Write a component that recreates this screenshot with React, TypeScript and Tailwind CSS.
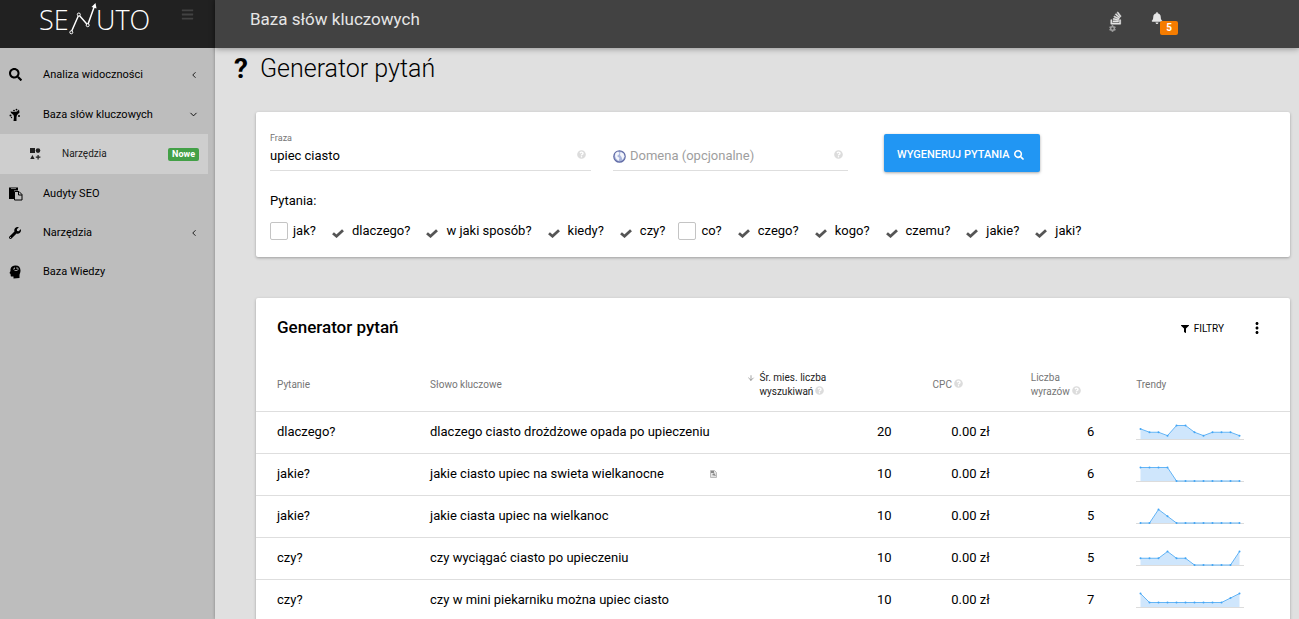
import { FaBars, FaBell, FaCog, FaFilter, FaQuestionCircle, FaSearch, FaStackOverflow, FaWrench } from "react-icons/fa";
import { ArrowDown, ChevronDown, ChevronLeft } from "lucide-react";
import { MdMoreVert } from "react-icons/md";

const questions = [
  { label: "jak?", checked: false },
  { label: "dlaczego?", checked: true },
  { label: "w jaki sposób?", checked: true },
  { label: "kiedy?", checked: true },
  { label: "czy?", checked: true },
  { label: "co?", checked: false },
  { label: "czego?", checked: true },
  { label: "kogo?", checked: true },
  { label: "czemu?", checked: true },
  { label: "jakie?", checked: true },
  { label: "jaki?", checked: true },
];

const rows = [
  { question: "dlaczego?", keyword: "dlaczego ciasto drożdżowe opada po upieczeniu", searches: 20, cpc: "0.00 zł", words: 6, trend: [3, 2, 2, 1, 4, 4, 2, 1, 2, 2, 2, 1] },
  { question: "jakie?", keyword: "jakie ciasto upiec na swieta wielkanocne", searches: 10, cpc: "0.00 zł", words: 6, snippet: true, trend: [1, 1, 1, 1, 0, 0, 0, 0, 0, 0, 0, 0] },
  { question: "jakie?", keyword: "jakie ciasta upiec na wielkanoc", searches: 10, cpc: "0.00 zł", words: 5, trend: [0, 0, 2, 1, 0, 0, 0, 0, 0, 0, 0, 0] },
  { question: "czy?", keyword: "czy wyciągać ciasto po upieczeniu", searches: 10, cpc: "0.00 zł", words: 5, trend: [1, 1, 1, 2, 1, 1, 0, 0, 0, 0, 0, 2] },
  { question: "czy?", keyword: "czy w mini piekarniku można upiec ciasto", searches: 10, cpc: "0.00 zł", words: 7, trend: [3, 1, 1, 1, 1, 1, 1, 1, 1, 1, 2, 3] },
];

const KeywordIcon = () => (
  <svg width="12" height="14" viewBox="0 0 12 14" fill="currentColor">
    <path d="M1.5 3.5 L5 4 L8 3.5 L10 1.5 L10.5 4.5 L8 7 L7.5 9 L7.5 13 L4.5 13 L5 9 L4.5 7 L2 5 Z" />
    <circle cx="1.5" cy="7.5" r="1" />
    <circle cx="5" cy="2.6" r=".9" />
    <circle cx="7.5" cy="1.6" r=".9" />
    <circle cx="10" cy="8" r="1" />
    <circle cx="2.5" cy="9.5" r=".7" />
  </svg>
);

const ToolsIcon = () => (
  <svg width="11" height="12" viewBox="0 0 11 12" fill="currentColor">
    <rect x="0" y="0" width="5" height="5" />
    <circle cx="8" cy="2.6" r="2.3" />
    <path d="M2.4 7 L4.6 11 L0.2 11 Z" />
    <path d="M7.5 7 h1.2 v1.6 h1.7 v1.2 h-1.7 v1.6 h-1.2 v-1.6 h-1.7 v-1.2 h1.7 Z" />
  </svg>
);

const AuditIcon = () => (
  <svg width="14" height="14" viewBox="0 0 14 14">
    <path d="M0 .5 h9 v3 H5 v8.500 H0 Z" fill="currentColor" />
    <path d="M2 1.5 h5" stroke="#bdbdbd" strokeWidth=".6" />
    <path d="M5.5 4.5 h4.5 l3 3 v5.500 h-7.500 Z" fill="#bdbdbd" stroke="currentColor" />
    <path d="M9.500 4.500 v3.500 h3.500" fill="none" stroke="currentColor" />
  </svg>
);

const KnowledgeIcon = () => (
  <svg width="13" height="14" viewBox="0 0 13 14">
    <path d="M6 .5 C9.5 .2 11.5 2.2 11.5 5.5 C11.5 8 10.5 8.5 10.5 10 V13 L4.5 13.5 V11.5 H2.2 C1.5 11.5 1.8 9.5 1.5 9 L.5 8 L1.5 6 C1.2 2.5 3 .7 6 .5 Z" fill="currentColor" />
    <path d="M4 4 h1.5 v-1.5 M8 2 v2 h2 M5.5 5.5 h3" stroke="#bdbdbd" strokeWidth=".8" fill="none" />
  </svg>
);

const menuItems = [
  { label: "Analiza widoczności", Icon: () => <FaSearch size={13} />, arrow: "left" },
  { label: "Baza słów kluczowych", Icon: KeywordIcon, arrow: "down" },
];

const bottomMenuItems = [
  { label: "Audyty SEO", Icon: AuditIcon },
  { label: "Narzędzia", Icon: () => <FaWrench size={12} />, arrow: "left" },
  { label: "Baza Wiedzy", Icon: KnowledgeIcon },
];

const Logo = () => (
  <svg width="116" height="44" viewBox="0 0 116 44" role="img" aria-label="Senuto" fill="#fff">
    <text x="0" y="30" className="font-['Open_Sans'] text-[27px] font-light">SE</text>
    <text x="57" y="30" className="font-['Open_Sans'] text-[27px] font-light">UTO</text>
    <path d="M32.5 31.5 L39.8 14.8 L48.7 25 L55.5 6" fill="none" stroke="#fff" strokeWidth="1.5" />
    <path d="M52.5 7 L56.5 3 L57.5 8.5 Z" />
    <g fill="#212121" stroke="#fff" strokeWidth="1">
      <circle cx="32.3" cy="32.3" r="1.5" />
      <circle cx="39.8" cy="14.5" r="1.5" />
      <circle cx="48.7" cy="25.2" r="1.5" />
    </g>
  </svg>
);

const GlobeIcon = () => (
  <svg width="13" height="13" viewBox="0 0 13 13">
    <circle cx="6.5" cy="6.5" r="5.7" fill="#aab6dc" stroke="#626ca6" strokeWidth="1.2" />
    <path d="M2.5 3 L5 1.5 L6.5 3 L5.5 5 L4 6 L6.5 8 L5.5 11 L3 8.5 L2 6 Z M7.5 2 L10.5 3.5 L11.500 6.500 L9.500 10 L8.500 7 L7 5 Z" fill="#f4f6fc" />
  </svg>
);

const Help = ({ className = "" }: { className?: string }) => (
  <FaQuestionCircle size={9} className={`inline-block shrink-0 text-[#dcdcdc] ${className}`} />
);

type MenuItemProps = { label: string; Icon: React.ComponentType; arrow?: string; height: string };

const MenuItem = ({ label, Icon, arrow, height }: MenuItemProps) => (
  <li>
    <a href="#" className={`flex items-center pl-[9px] pr-4 pt-px ${height}`}>
      <span className="w-[34px]">
        <Icon />
      </span>
      <span className="grow">{label}</span>
      {arrow === "left" && <ChevronLeft size={10} />}
      {arrow === "down" && <ChevronDown size={11} />}
    </a>
  </li>
);

const Sparkline = ({ values }: { values: number[] }) => {
  const max = Math.max(...values);
  const points = values.map((v, i) => [4.5 + i * 9, 15 - (v / max) * 13.5]);
  const line = points.map((p) => p.join(",")).join(" ");
  return (
    <svg width="108" height="17" viewBox="0 0 108 17" className="block">
      <path d="M0 15.5 H108" stroke="#dcdcdc" />
      <polygon points={`4.5,15 ${line} 103.5,15`} fill="#cfe6fc" />
      <polyline points={line} fill="none" stroke="#64b5f6" />
      {points.map(([x, y]) => (
        <circle key={x} cx={x} cy={y} r="1" fill="#42a5f5" />
      ))}
    </svg>
  );
};

const Sidebar = () => (
  <aside className="w-[215px] shrink-0 bg-[#bdbdbd]">
    <div className="flex h-12 items-start bg-[#212121] pl-[39px] pr-[21px]">
      <Logo />
      <button aria-label="Menu" className="ml-auto mt-2 text-[#424242]">
        <FaBars size={13} />
      </button>
    </div>
    <nav className="pt-[6px] text-[11px] text-black">
      <ul>
        {menuItems.map((item) => (
          <MenuItem key={item.label} {...item} height="h-10" />
        ))}
        <li className="mr-[7px] bg-[#cecece]">
          <a href="#" className="flex h-10 items-center pl-[30px] pr-[9px] text-[10px] text-[#212121]">
            <span className="w-8">
              <ToolsIcon />
            </span>
            <span className="grow">Narzędzia</span>
            <span className="rounded-[2px] bg-[#43a047] px-1 text-[9px] font-bold leading-[13px] text-white">Nowe</span>
          </a>
        </li>
        {bottomMenuItems.map((item) => (
          <MenuItem key={item.label} {...item} height="h-[39px]" />
        ))}
      </ul>
    </nav>
  </aside>
);

const SearchForm = () => (
  <form className="rounded-[2px] bg-white px-[14px] pb-4 pt-[22px] shadow-[0_1px_3px_rgba(0,0,0,0.3)]">
    <div className="grid grid-cols-[321fr_235fr_406fr] gap-[22px]">
      <div className="flex h-[37px] flex-col justify-end border-b border-[#dedede] pb-1">
        <label htmlFor="phrase" className="mb-[3px] text-[9px] leading-[10px] text-[#757575]">Fraza</label>
        <div className="flex items-start pr-[5px]">
          <input id="phrase" defaultValue="upiec ciasto" className="h-5 min-w-0 grow outline-none" />
          <Help className="mt-1" />
        </div>
      </div>
      <div className="flex h-[37px] items-end border-b border-[#dedede] pb-1">
        <div className="flex grow items-center gap-1 pr-[5px]">
          <GlobeIcon />
          <input aria-label="Domena" placeholder="Domena (opcjonalne)" className="h-5 min-w-0 grow outline-none placeholder:text-[#9e9e9e]" />
          <Help className="mt-1 self-start" />
        </div>
      </div>
      <div>
        <button type="button" className="ml-[14px] flex h-[38px] items-center gap-1 rounded-[2px] bg-[#2196f3] pl-[13px] pr-4 pt-[3px] text-[11px] font-medium text-white shadow-[0_1px_3px_rgba(0,0,0,0.35)]">
          WYGENERUJ PYTANIA <FaSearch size={10} />
        </button>
      </div>
    </div>
    <fieldset className="mt-5">
      <legend className="leading-[18px]">Pytania:</legend>
      <div className="mt-[11px] flex flex-wrap gap-x-[13px]">
        {questions.map(({ label, checked }) => (
          <label key={label} className="flex items-center gap-[5px]">
            <span className="relative block size-[18px]">
              <input type="checkbox" defaultChecked={checked} className="peer block size-[18px] appearance-none rounded-[2px] border border-[#c4c4c4] checked:border-transparent" />
              <svg viewBox="0 0 12 9" className="pointer-events-none absolute left-[3px] top-[7px] hidden h-[9px] w-3 peer-checked:block">
                <path d="M1 4.2 L4.5 7.2 L11 1.2" fill="none" stroke="#555" strokeWidth="2.8" />
              </svg>
            </span>
            {label}
          </label>
        ))}
      </div>
    </fieldset>
  </form>
);

const ResultsTable = () => (
  <section className="rounded-[2px] bg-white shadow-[0_1px_3px_rgba(0,0,0,0.3)]">
    <div className="flex h-[62px] items-center pl-[21px] pr-6">
      <h2 className="grow pb-[5px] text-[17px] font-medium">Generator pytań</h2>
      <button className="flex items-center gap-[5px] text-[10px]">
        <FaFilter size={8} /> FILTRY
      </button>
      <button aria-label="Więcej" className="ml-6 pb-[3px]">
        <MdMoreVert size={18} />
      </button>
    </div>
    <table className="w-full table-fixed">
      <colgroup>
        <col className="w-[14.8%]" />
        <col className="w-[30.8%]" />
        <col className="w-[17.9%]" />
        <col className="w-[9.5%]" />
        <col className="w-[10.1%]" />
        <col />
      </colgroup>
      <thead className="text-left text-[10px] leading-[14px] text-[#757575]">
        <tr className="h-[51px] border-b border-[#dedede]">
          <th className="px-[21px] font-normal">Pytanie</th>
          <th className="px-[21px] font-normal">Słowo kluczowe</th>
          <th className="px-[19px] font-normal text-[#212121]">
            <div className="flex gap-[5px]">
              <ArrowDown size={8} className="mt-[3px] shrink-0 text-[#757575]" />
              <span className="whitespace-nowrap">
                Śr. mies. liczba
                <br />
                wyszukiwań
                <Help className="ml-[2px] align-text-top" />
              </span>
            </div>
          </th>
          <th className="whitespace-nowrap pl-5 font-normal">
            CPC
            <Help className="ml-[2px] align-text-top" />
          </th>
          <th className="whitespace-nowrap pl-5 font-normal">
            Liczba
            <br />
            wyrazów
            <Help className="ml-[2px] align-text-top" />
          </th>
          <th className="px-[21px] font-normal">Trendy</th>
        </tr>
      </thead>
      <tbody>
        {rows.map((row) => (
          <tr key={row.keyword} className="h-[42px] border-b border-[#dedede]">
            <td className="px-[21px]">{row.question}</td>
            <td className="pl-[21px] pr-[11px]">
              <div className="flex items-center justify-between whitespace-nowrap">
                {row.keyword}
                {row.snippet && (
                  <svg width="7" height="8" viewBox="0 0 7 8">
                    <path d="M.5 .5 h4 l2 2 v5 h-6 Z" fill="#e4e4e4" stroke="#bbb" />
                    <path d="M1 1 h3 v2 h-3 Z M2 5 l2 -2 l2 3 Z" fill="#888" />
                  </svg>
                )}
              </div>
            </td>
            <td className="px-[21px] text-right">{row.searches}</td>
            <td className="whitespace-nowrap px-[21px] text-right">{row.cpc}</td>
            <td className="px-[21px] text-right">{row.words}</td>
            <td className="pl-[21px]">
              <Sparkline values={row.trend} />
            </td>
          </tr>
        ))}
      </tbody>
    </table>
  </section>
);

const App = () => {
  return (
    <div className="flex h-screen overflow-hidden bg-[#e0e0e0] font-['Roboto',sans-serif] text-[13px] leading-5 text-black">
      <Sidebar />
      <div className="min-w-0 grow shadow-[0_0_3px_rgba(0,0,0,0.3)]">
        <header className="flex h-12 items-start bg-[#424242] pl-[35px] pr-[121px] pt-[9px] text-[#e6e6e6] shadow-[0_1px_6px_rgba(0,0,0,0.35)]">
          <div className="grow text-[17px]">Baza słów kluczowych</div>
          <button aria-label="Kolejka" className="mr-7 flex flex-col">
            <FaStackOverflow size={14} className="mt-[2px]" stroke="currentColor" strokeWidth={20} />
            <FaCog size={7} className="text-[#9e9e9e]" />
          </button>
          <button aria-label="Powiadomienia" className="flex items-start">
            <FaBell size={12} className="-mr-[3px] mt-[3px]" />
            <span className="mt-3 rounded-[2px] bg-[#f57c00] px-[6px] text-[10px] font-bold leading-[14px] text-white">5</span>
          </button>
        </header>
        <main className="pl-[41px] pr-[9px]">
          <h1 className="-ml-[22px] flex h-16 items-start gap-3 pt-[5px] text-[25px] font-light leading-8">
            <span className="text-[28px] font-bold">?</span>
            Generator pytań
          </h1>
          <div className="flex flex-col gap-[41px]">
            <SearchForm />
            <ResultsTable />
          </div>
        </main>
      </div>
    </div>
  );
};

export default App;
